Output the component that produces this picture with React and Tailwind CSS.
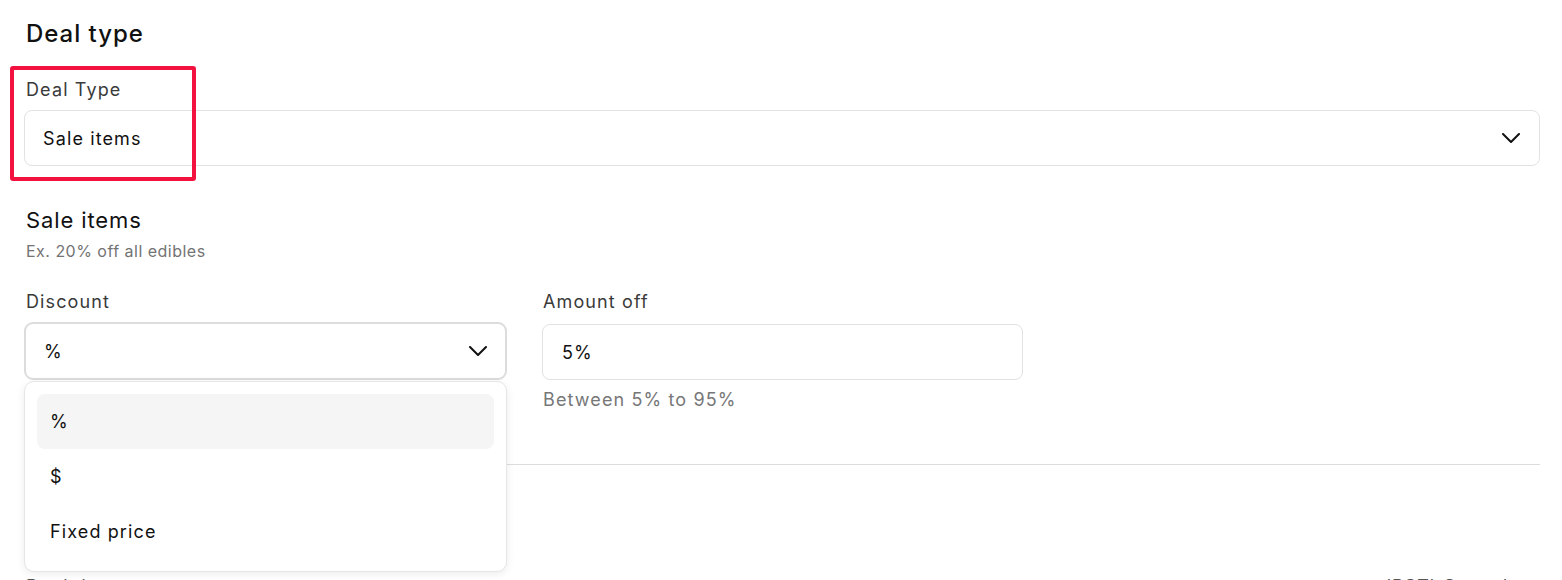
import React, { useState } from 'react';

const Chevron = () => (
  <svg width="18" height="10" viewBox="0 0 18 10" fill="none" stroke="#111" strokeWidth="2" strokeLinecap="round" strokeLinejoin="round">
    <path d="M1 1l8 8 8-8" />
  </svg>
);

const options = ['%', '$', 'Fixed price'];

export default function App() {
  const [discount] = useState('%');

  return (
    <div className="relative h-[580px] overflow-hidden bg-white pl-[24px] pr-[22px] pt-[18px] tracking-[0.07em] text-[#111] [font-family:Inter,'Liberation_Sans',sans-serif]">
      <h2 className="ml-[2px] text-[24px] font-medium leading-[32px] tracking-[0.04em]">Deal type</h2>

      {/* annotation box */}
      <div className="absolute left-[10px] top-[66px] h-[115px] w-[186px] rounded-[3px] border-4 border-[#f2113f]" />

      <div className="mt-[28px]">
        <label className="ml-[2px] block text-[18px] leading-[24px] text-[#3a3a3a]">Deal Type</label>
        <div className="mt-[8px] flex h-[56px] items-center justify-between rounded-[8px] border border-[#e2e2e2] pl-[18px] pr-[19px]">
          <span className="text-[18px]">Sale items</span>
          <Chevron />
        </div>
      </div>

      <div className="mt-[40px] ml-[2px]">
        <h3 className="text-[22px] leading-[28px] tracking-[0.04em]">Sale items</h3>
        <p className="mt-[7px] text-[16px] leading-[20px] tracking-[0.03em] text-[#737373]">Ex. 20% off all edibles</p>
      </div>

      <div className="mt-[29px] flex gap-[35px]">
        <div className="w-[483px]">
          <label className="ml-[2px] block text-[18px] leading-[24px] text-[#3a3a3a]">Discount</label>
          <div className="mt-[8px] flex h-[58px] items-center justify-between rounded-[9px] border-2 border-[#dcdcdc] pl-[18px] pr-[18px]">
            <span className="text-[18px]">{discount}</span>
            <Chevron />
          </div>
        </div>
        <div className="w-[481px]">
          <label className="ml-[1px] block text-[18px] leading-[24px] text-[#3a3a3a]">Amount off</label>
          <div className="mt-[10px] flex h-[56px] items-center rounded-[8px] border border-[#e2e2e2] pl-[19px]">
            <span className="text-[18px]">5%</span>
          </div>
          <p className="ml-[1px] mt-[8px] text-[18px] leading-[24px] text-[#777]">Between 5% to 95%</p>
        </div>
      </div>

      <div className="mt-[52px] border-t border-[#dcdcdc]" />

      <div className="mt-[110px] flex justify-between px-[2px] text-[18px] leading-[24px] text-[#555]">
        <span>Deal dates</span>
        <span>(PST) Start date</span>
      </div>

      {/* open dropdown menu */}
      <div className="absolute left-[24px] top-[381px] w-[483px] rounded-[10px] border border-[#e6e6e6] bg-white p-[12px] shadow-[0_2px_8px_rgba(0,0,0,0.08)]">
        {options.map((o) => (
          <div
            key={o}
            className={`flex h-[55px] items-center rounded-[8px] px-[13px] text-[18px] ${o === discount ? 'bg-[#f5f5f5]' : ''}`}
          >
            {o}
          </div>
        ))}
      </div>
    </div>
  );
}
